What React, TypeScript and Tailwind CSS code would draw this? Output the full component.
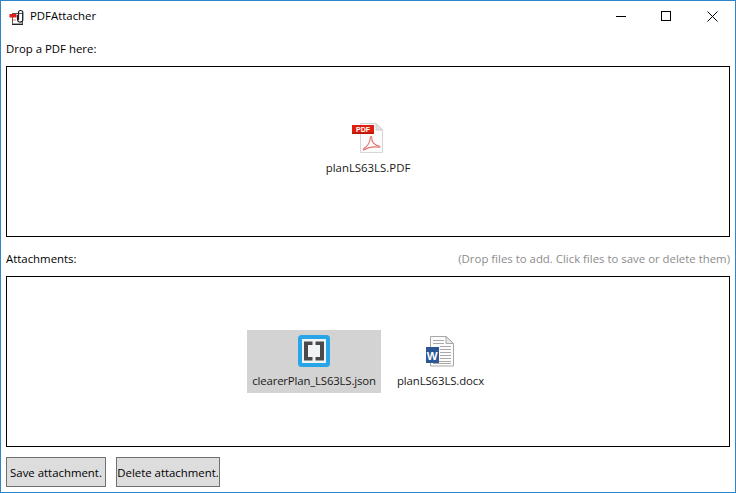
import React from "react";

const PdfIcon = () => (
  <svg width="32" height="32" viewBox="0 0 32 32" className="block">
    <path d="M8.5 0.5H24L30.5 7V29.5H8.5Z" fill="#fbfbfb" stroke="#d6d6d6" />
    <path d="M24 0.5V7H30.5Z" fill="#e2e2e2" stroke="#d0d0d0" />
    <rect x="0" y="2" width="22" height="9" fill="#e0200f" />
    <rect x="0" y="9.5" width="22" height="1.5" fill="#b51507" />
    <text x="4" y="8.8" fontSize="7" fontWeight="700" fill="#fff" fontFamily="Liberation Sans, sans-serif">PDF</text>
    <path d="M12 25.5C15 23.5 18 19 18.4 14.5C18.6 13 20 13.4 19.8 15C19.3 18.5 22.5 22.5 27 23C28.4 23.2 28 24.4 26.5 24.2C22 23.5 17 23.5 12.7 26.5C11.4 27.3 10.8 26.4 12 25.5Z" fill="none" stroke="#e0766e" strokeWidth="1.1" />
  </svg>
);

const BracketsIcon = () => (
  <svg width="32" height="32" viewBox="0 0 32 32" className="block">
    <rect x="0" y="0" width="32" height="32" rx="3.5" fill="#27a5e6" />
    <rect x="4" y="4" width="24" height="24" fill="#f1f4f5" />
    <path d="M6 6.5H14.5V10H10V22H14.5V25.5H6Z" fill="#4a4a4a" />
    <path d="M26 6.5H17.5V10H22V22H17.5V25.5H26Z" fill="#4a4a4a" />
  </svg>
);

const WordIcon = () => (
  <svg width="32" height="31" viewBox="0 0 32 31" className="block">
    <path d="M5.5 0.5H21L28.5 7.5V30H5.5Z" fill="#fcfcfc" stroke="#a8a8a8" />
    <path d="M21 0.5V7.5H28.5Z" fill="#e8e8e8" stroke="#a8a8a8" />
    <path d="M8 4.5H19M8 7.5H19M15 10.5H26M15 13.5H26M15 16.5H26M15 19.5H26M15 22.5H26M8 25.5H26M8 27.5H26" stroke="#a9a9a9" />
    <rect x="1" y="11" width="13" height="16" fill="#2b5797" />
    <text x="1.8" y="23.5" fontSize="11.5" fontWeight="700" fill="#fff" fontFamily="Liberation Sans, sans-serif">W</text>
  </svg>
);

const AppIcon = () => (
  <svg width="16" height="16" viewBox="0 0 16 16" className="block">
    <rect x="4.5" y="4.5" width="10" height="10.5" fill="#fff" stroke="#555" strokeWidth="1" />
    <path d="M4 15.5H15" stroke="#222" />
    <rect x="1.5" y="5" width="7" height="3.5" fill="#e0201a" />
    <path d="M5 11H8" stroke="#e57a74" />
    <path d="M10.5 11V3.5C10.5 0.8 14.8 0.8 14.8 3.5V10.5C14.8 14 9.5 14 9.5 10.5V6" fill="none" stroke="#222" strokeWidth="1.2" />
  </svg>
);

const btn = "flex h-[30px] items-center justify-center border border-[#707070] bg-[#dddddd] pt-[1px] text-[11.4px] whitespace-nowrap text-black";
const fileName = "mt-[6px] text-[11.4px] leading-[16px] whitespace-nowrap text-[#1a1a1a]";

export default function App() {
  return (
    <div
      className="flex h-[493px] w-[736px] flex-col overflow-hidden border border-[#2d86c9] bg-white text-black"
      style={{ fontFamily: '"Open Sans", "Noto Sans", sans-serif' }}
    >
      <div className="flex h-[30px] shrink-0 items-center">
        <div className="ml-[7px] mt-[1px]"><AppIcon /></div>
        <div className="ml-[6px] text-[11.4px] leading-[16px]">PDFAttacher</div>
        <div className="ml-auto flex h-full items-center">
          <div className="flex h-full w-[45px] items-center justify-center">
            <svg width="10" height="10" viewBox="0 0 10 10"><path d="M0 5.5H10" stroke="#000" /></svg>
          </div>
          <div className="flex h-full w-[46px] items-center justify-center">
            <svg width="10" height="10" viewBox="0 0 10 10"><rect x="0.5" y="0.5" width="9" height="9" fill="none" stroke="#000" /></svg>
          </div>
          <div className="flex h-full w-[46px] items-center justify-center">
            <svg width="11" height="11" viewBox="0 0 11 11"><path d="M0.5 0.5L10.5 10.5M10.5 0.5L0.5 10.5" stroke="#000" /></svg>
          </div>
        </div>
      </div>

      <div className="flex min-h-0 flex-1 flex-col px-[5px]">
        <div className="flex h-[35px] shrink-0 items-center text-[11.4px]">Drop a PDF here:</div>
        <div className="flex h-[171px] shrink-0 items-center justify-center border border-black pb-[4px]">
          <div className="flex flex-col items-center">
            <PdfIcon />
            <div className="mt-[5px] text-[11.4px] leading-[16px] text-[#1a1a1a]">planLS63LS.PDF</div>
          </div>
        </div>
        <div className="flex h-[39px] shrink-0 items-center justify-between pt-[4px] text-[11.4px]">
          <span>Attachments:</span>
          <span className="text-[#8c8c8c]">(Drop files to add. Click files to save or delete them)</span>
        </div>
        <div className="flex h-[171px] shrink-0 items-center justify-center gap-[11px] border border-black">
          <div className="flex h-[63px] w-[134px] flex-col items-center bg-[#d3d3d3] pt-[5px]">
            <BracketsIcon />
            <div className={`${fileName} tracking-[-0.17px]`}>clearerPlan_LS63LS.json</div>
          </div>
          <div className="flex h-[63px] w-[97px] flex-col items-center pt-[6px]">
            <WordIcon />
            <div className={`${fileName} tracking-[-0.12px]`}>planLS63LS.docx</div>
          </div>
        </div>
        <div className="mt-[10px] flex gap-[10px]">
          <div className={`${btn} w-[100px]`}>Save attachment.</div>
          <div className={`${btn} w-[104px]`}>Delete attachment.</div>
        </div>
      </div>
    </div>
  );
}
